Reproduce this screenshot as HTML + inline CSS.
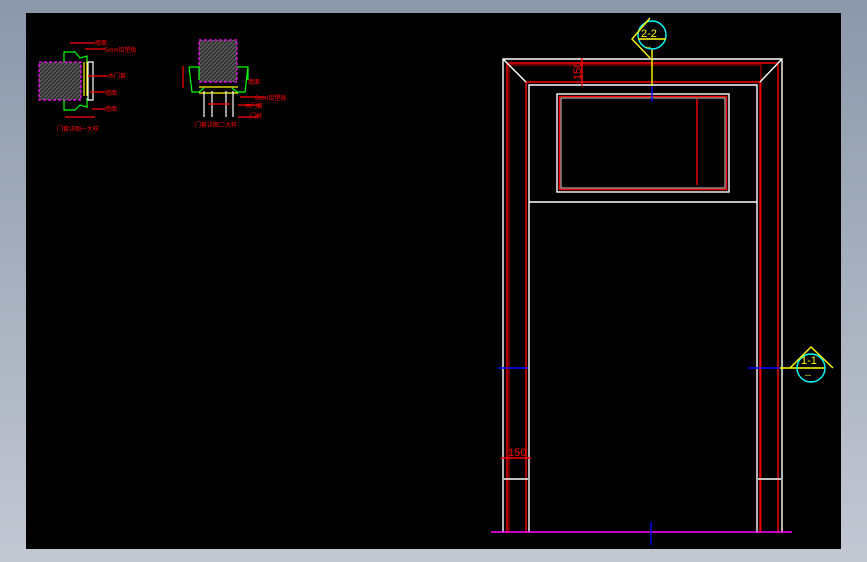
<!DOCTYPE html>
<html><head><style>
html,body{margin:0;padding:0;width:867px;height:562px;overflow:hidden;background:linear-gradient(#8b98aa,#c3c8d3);}
svg{position:absolute;left:0;top:0}
</style></head><body>
<svg width="867" height="562" viewBox="0 0 867 562" font-family="Liberation Sans, sans-serif">
<defs><pattern id="h" width="4" height="4" patternUnits="userSpaceOnUse"><rect width="4" height="4" fill="#555"/><path d="M0 4L4 0" stroke="#222" stroke-width="1"/></pattern></defs>
<rect x="26" y="13" width="815" height="536" fill="#000"/>
<g fill="none" stroke-width="1.4">
<path d="M503 533V59H782V533" stroke="#fff"/>
<path d="M529 533V85H757V533" stroke="#fff"/>
<path d="M507 533V63H778V533" stroke="#f00"/>
<path d="M509 533V65H761V533" stroke="#f00" stroke-width="0.8"/>
<path d="M526 533V82H760V533" stroke="#f00"/>
<path d="M503 59L526 82M782 59L760 82" stroke="#fff"/>
<path d="M529 202H757" stroke="#fff"/>
<rect x="557" y="94" width="172" height="98" stroke="#fff"/>
<rect x="559.5" y="96.5" width="167" height="93" stroke="#f00"/>
<rect x="561" y="98" width="164" height="90" stroke="#fff" stroke-width="0.8"/>
<path d="M697 99V185" stroke="#f00"/>
<path d="M582 58V86" stroke="#f00"/>
<path d="M504 479H528M758 479H781" stroke="#fff"/>
<path d="M501 458H531" stroke="#f00"/>
<path d="M491 532H792" stroke="#f0f" stroke-width="1.6"/>
<path d="M651 522V545" stroke="#00f"/>
<path d="M498 368H528M748 368H780" stroke="#00f"/>
<path d="M780 368H825" stroke="#ff0"/>
<path d="M652 49V86" stroke="#ff0"/>
<path d="M652 86V102" stroke="#00f"/>
<circle cx="652" cy="35" r="14" stroke="#0ff"/>
<path d="M638 39H666M650 18L632 39L650 58" stroke="#ff0"/>
<circle cx="811" cy="368" r="14" stroke="#0ff"/>
<path d="M790 368L811 347L833 368" stroke="#ff0"/>
</g>
<g fill="none" stroke-width="1.2">
<rect x="39" y="62" width="42" height="38" fill="url(#h)" stroke="#f0f" stroke-dasharray="3 2"/>
<path d="M64 62V52H75L80 58L87 56V65M64 100V110H75L80 105L87 107V98" stroke="#0f0"/>
<path d="M84 62V96M87 62V96" stroke="#ff0"/>
<path d="M88 62V100H93V62Z" stroke="#fff"/>
<path d="M65 117H95M70 43H95M85 49H105M88 76H108M90 92H105M92 109H105" stroke="#f00"/>
<rect x="199" y="40" width="38" height="42" fill="url(#h)" stroke="#f0f" stroke-dasharray="3 2"/>
<path d="M189 67H199V80M237 67H248V80M189 67L192 92H199L204 88M248 67L245 92H237L232 88" stroke="#0f0"/>
<path d="M199 87H238M199 93H238" stroke="#ff0"/>
<path d="M204 91V117M233 91V117M212 91V117M226 91V117" stroke="#fff"/>
<path d="M183 66V88M208 104H230M240 97H265M238 105H260M238 117H258" stroke="#f00"/>
</g>
<g fill="#f00" font-size="6">
<text x="95" y="45">墙面</text><text x="105" y="52">5mm铝塑板</text><text x="108" y="78">木门套</text><text x="105" y="95">墙面</text><text x="105" y="111">墙面</text>
<text x="57" y="131">门套详图一大样</text>
<text x="248" y="84">墙面</text><text x="255" y="100">5mm铝塑板</text><text x="245" y="108">木门套</text><text x="250" y="118">门框</text>
<text x="195" y="127">门套详图二大样</text>
</g>
<g fill="#f00" font-size="11">
<text x="581" y="80" transform="rotate(-90 581 80)">150</text>
<text x="508" y="456">150</text>
</g>
<g fill="#ff0" font-size="11">
<text x="641" y="37">2-2</text><text x="645" y="50" font-size="9">--</text>
<text x="801" y="364">1-1</text><text x="805" y="378" font-size="9">--</text>
</g>
</svg>
</body></html>
